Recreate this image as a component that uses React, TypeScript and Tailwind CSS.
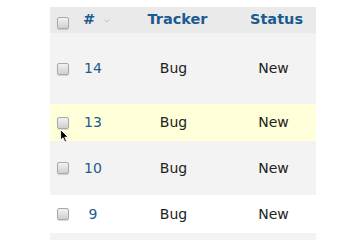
import React from "react";

const rows = [
  { id: 14, tracker: "Bug", status: "New", h: "h-[71px]", bg: "bg-[#f3f3f3]" },
  { id: 13, tracker: "Bug", status: "New", h: "h-[37px]", bg: "bg-[#ffffd9]", cursor: true },
  { id: 10, tracker: "Bug", status: "New", h: "h-[54px]", bg: "bg-[#f3f3f3]" },
  { id: 9, tracker: "Bug", status: "New", h: "h-[38px]", bg: "bg-white" },
];

function Box() {
  return (
    <div className="w-[12px] h-[12px] rounded-[2px] border border-[#a9a9a9] bg-gradient-to-b from-[#f2f2f2] to-[#cfcfcf] shadow-[0_1px_1px_rgba(0,0,0,0.15)]" />
  );
}

export default function App() {
  return (
    <div className="w-[360px] h-[240px] bg-white overflow-hidden pt-[7px] pl-[50px] font-['DejaVu_Sans',Verdana,sans-serif] text-[14px]">
      <div className="w-[266px]">
        <div className="grid grid-cols-[26px_34px_125px_81px] items-center h-[26px] bg-[#eaeaea] font-bold text-[14.5px] text-[#1b5b8e]">
          <div className="flex justify-center pt-[5px]"><Box /></div>
          <div className="flex items-center pl-[7px] gap-[9px] whitespace-nowrap">
            <span>#</span>
            <svg width="9" height="6" viewBox="0 0 9 6" className="mt-[1px]">
              <path d="M0.7 0.7 L4.5 4.5 L8.3 0.7" fill="none" stroke="#bdbdbd" strokeWidth="1.4" />
            </svg>
          </div>
          <div className="text-center pl-[10px]">Tracker</div>
          <div className="text-center pl-[2px]">Status</div>
        </div>
        {rows.map((r) => (
          <div key={r.id} className={`grid grid-cols-[26px_34px_125px_81px] items-center ${r.h} ${r.bg}`}>
            <div className="relative flex justify-center">
              <Box />
              {r.cursor && (
                <svg width="10" height="14" viewBox="0 0 10 14" className="absolute left-[10px] top-[12px]">
                  <path d="M0.6 0.6 L0.6 11 L3 8.8 L4.9 13 L6.6 12.2 L4.8 8.2 L8.2 8.2 Z" fill="#000" stroke="#fff" strokeWidth="0.9" />
                </svg>
              )}
            </div>
            <div className="text-center text-[#1b5b8e]">{r.id}</div>
            <div className="text-center text-[#222] pl-[2px]">{r.tracker}</div>
            <div className="text-center text-[#222] pr-[4px]">{r.status}</div>
          </div>
        ))}
        <div className="h-[20px] bg-[#f3f3f3]" />
      </div>
    </div>
  );
}
